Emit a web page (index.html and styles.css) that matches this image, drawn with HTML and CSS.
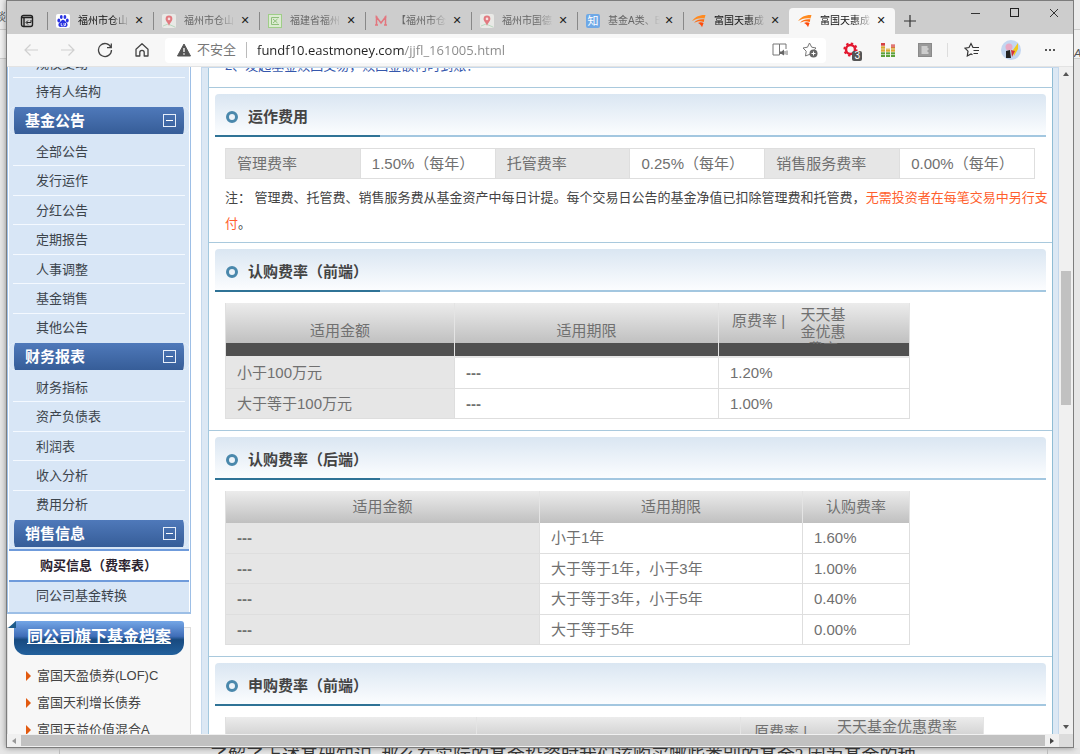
FILE: index.html
```html
<!DOCTYPE html>
<html lang="zh-CN">
<head>
<meta charset="utf-8">
<title>富国天惠成长 基金费率</title>
<link rel="stylesheet" href="styles.css">
</head>
<body>
<div class="gutter gutter-left">谈</div>
<div class="window">
  <header class="tabstrip">
    <button class="tab-menu" aria-label="标签操作"><svg width="14" height="14" viewBox="0 0 14 14"><rect x="1.5" y="1.5" width="11" height="11" rx="2" fill="none" stroke="#222" stroke-width="1.4"/><path d="M1.500 3.500h11M4 3v9" stroke="#222" stroke-width="1.400"/><path d="M11 6v2.500H6.500M8 6.500l-2 2 2 2" fill="none" stroke="#222"/></svg></button>
    <nav class="tabs">
      <div class="tab"><svg class="fav" viewBox="0 0 14 14"><rect width="14" height="14" rx="2" fill="#fff"/><g fill="#2932e1"><ellipse cx="2.800" cy="6.500" rx="1.400" ry="1.900"/><ellipse cx="5.300" cy="3" rx="1.400" ry="2"/><ellipse cx="8.900" cy="3" rx="1.400" ry="2"/><ellipse cx="11.300" cy="6.500" rx="1.400" ry="1.900"/><path d="M7 5.800c1.500 0 2 1.600 3.500 2.800 2 1.800 1 4.600-1 4.400-1.700-.3-3.300-.3-5 0-2 .2-3-2.600-1-4.400C5 7.400 5.500 5.800 7 5.800z"/></g><path d="M5.200 9v2.500h1.300M8 9v2.500h1.500V9" fill="none" stroke="#fff" stroke-width=".8"/></svg><span class="tab-title">福州市仓山</span><button class="close" aria-label="关闭"></button></div>
      <div class="tab idle"><svg class="fav" viewBox="0 0 14 14"><rect width="14" height="14" rx="2" fill="#e9e9e6"/><path d="M1 12l5-2 7 3" stroke="#b9d9c0" fill="none"/><path d="M7 1.500a3.400 3.400 0 0 1 3.400 3.400C10.400 7.400 7 9.500 7 12 7 9.500 3.600 7.400 3.600 4.900A3.400 3.400 0 0 1 7 1.500z" fill="#e27a80"/><circle cx="7" cy="4.900" r="1.300" fill="#f7dede"/></svg><span class="tab-title">福州市仓山</span><button class="close" aria-label="关闭"></button></div>
      <div class="tab idle"><svg class="fav" viewBox="0 0 14 14"><rect x=".5" y=".5" width="13" height="13" fill="#dcebd2" stroke="#9fce88"/><path d="M11 3.500H3.500v7H11M5 5l4.500 4M9.500 5L5 9" fill="none" stroke="#8fbf7b"/></svg><span class="tab-title">福建省福州</span><button class="close" aria-label="关闭"></button></div>
      <div class="tab idle"><svg class="fav" viewBox="0 0 14 14"><path d="M2.500 11V3l4.500 6 4.500-6v8M1 11h3M10 11h3M1.500 3h2M10.500 3h2" fill="none" stroke="#e2777f" stroke-width="1.500"/></svg><span class="tab-title">【福州市仓</span><button class="close" aria-label="关闭"></button></div>
      <div class="tab idle"><svg class="fav" viewBox="0 0 14 14"><rect width="14" height="14" rx="2" fill="#e9e9e6"/><path d="M1 12l5-2 7 3" stroke="#b9d9c0" fill="none"/><path d="M7 1.500a3.400 3.400 0 0 1 3.400 3.400C10.400 7.400 7 9.500 7 12 7 9.500 3.600 7.400 3.600 4.900A3.400 3.400 0 0 1 7 1.500z" fill="#e27a80"/><circle cx="7" cy="4.900" r="1.300" fill="#f7dede"/></svg><span class="tab-title">福州市国德</span><button class="close" aria-label="关闭"></button></div>
      <div class="tab idle"><span class="fav fav-zhi">知</span><span class="tab-title">基金A类、B</span><button class="close" aria-label="关闭"></button></div>
      <div class="tab"><svg class="fav" viewBox="0 0 14 14"><path d="M0 7C3 3 7 .8 13.500 1L12.500 4.500C7 3.500 4 5 0 7z" fill="#ff8a1f"/><path d="M2 8.800C5 5.500 8 5 12.300 5.300L11.800 8C8 6.500 5 7.300 2 8.800z" fill="#ff6a10"/><path d="M6 9c2-1 4-.8 5.600 0L10 13.200C9 11 8 10 6 9z" fill="#ff4a0a"/></svg><span class="tab-title">富国天惠成</span><button class="close" aria-label="关闭"></button></div>
      <div class="tab active"><svg class="fav" viewBox="0 0 14 14"><path d="M0 7C3 3 7 .8 13.500 1L12.500 4.500C7 3.500 4 5 0 7z" fill="#ff8a1f"/><path d="M2 8.800C5 5.500 8 5 12.300 5.300L11.800 8C8 6.500 5 7.300 2 8.800z" fill="#ff6a10"/><path d="M6 9c2-1 4-.8 5.600 0L10 13.200C9 11 8 10 6 9z" fill="#ff4a0a"/></svg><span class="tab-title">富国天惠成</span><button class="close" aria-label="关闭"></button></div>
    </nav>
    <button class="new-tab" aria-label="新建标签"><svg width="12" height="12" viewBox="0 0 12 12"><path d="M6 0v12M0 6h12" stroke="#333" stroke-width="1.200"/></svg></button>
    <div class="win-controls">
      <button aria-label="最小化"><svg width="10" height="10" viewBox="0 0 10 10"><path d="M0 5.500h9" stroke="#333"/></svg></button>
      <button aria-label="最大化"><svg width="10" height="10" viewBox="0 0 10 10"><rect x=".5" y=".5" width="8" height="8" fill="none" stroke="#222"/></svg></button>
      <button aria-label="关闭窗口"><svg width="10" height="10" viewBox="0 0 10 10"><path d="M1 1l8 8M9 1L1 9" stroke="#333"/></svg></button>
    </div>
  </header>

  <div class="toolbar">
    <div class="nav-buttons">
      <button aria-label="后退"><svg width="16" height="16" viewBox="0 0 16 16"><path d="M15 8H2M7.500 2.500L2 8l5.500 5.500" fill="none" stroke="#d0d0d0" stroke-width="1.200"/></svg></button>
      <button aria-label="前进"><svg width="16" height="16" viewBox="0 0 16 16"><path d="M1 8h13M8.500 2.500L14 8l-5.500 5.500" fill="none" stroke="#d0d0d0" stroke-width="1.200"/></svg></button>
      <button aria-label="刷新"><svg width="16" height="16" viewBox="0 0 16 16"><path d="M14 5.500A6.500 6.500 0 1 0 14.500 8M14.300 1.500v4.200H10" fill="none" stroke="#444" stroke-width="1.300"/></svg></button>
      <button aria-label="主页"><svg width="16" height="16" viewBox="0 0 16 16"><path d="M2 7.200L8 1.800l6 5.400V14h-3.800v-3.500a2.200 2.200 0 0 0-4.400 0V14H2z" fill="none" stroke="#444" stroke-width="1.300" stroke-linejoin="round"/></svg></button>
    </div>
    <div class="address">
      <svg width="14" height="14" viewBox="0 0 14 14"><path d="M7 1l6.500 12H.5z" fill="#555" stroke="#555" stroke-linejoin="round"/><path d="M7 5v4M7 10.300v1.400" stroke="#fff" stroke-width="1.300"/></svg>
      <label class="unsafe" for="url">不安全</label>
      <input id="url" class="url" type="text" value="fundf10.eastmoney.com/jjfl_161005.html">
      <button aria-label="朗读"><svg width="16" height="14" viewBox="0 0 16 14"><path d="M7.500 12H1V1h6.500v11M7.500 1H14v5" fill="none" stroke="#777"/><path d="M8 8.500h1.500L12 6.500v6L9.500 11H8z" fill="#666"/><path d="M13 8v3.500M15 7.500v4.500" stroke="#777"/></svg></button>
      <button aria-label="收藏此页"><svg width="16" height="16" viewBox="0 0 16 16"><path d="M8 12.200L3.500 14l.7-4.800L1 6l4.500-.8L7.500 1l2.200 4.200 4.300.8-1.500 1.600" fill="none" stroke="#777"/><circle cx="11.500" cy="11.500" r="4" fill="#666"/><path d="M11.500 9.500v4M9.500 11.500h4" stroke="#fff"/></svg></button>
    </div>
    <div class="extensions">
      <button class="badged" aria-label="扩展"><svg width="16" height="16" viewBox="0 0 16 16"><circle cx="7.500" cy="7.500" r="4.500" fill="none" stroke="#e3172f" stroke-width="2.500"/><circle cx="7.500" cy="7.500" r="6.200" fill="none" stroke="#e3172f" stroke-width="1.800" stroke-dasharray="2.400 2.400"/></svg><span class="badge">3</span></button>
      <button aria-label="均衡器"><svg width="14" height="14" viewBox="0 0 14 14"><path d="M2 0v14" stroke="#d64242" stroke-width="4"/><path d="M2 3v11M7 5.500v8.500M12 3.500v10.500" stroke="#d8a92e" stroke-width="4"/><path d="M12 1.500v3" stroke="#d64242" stroke-width="4"/><path d="M2 9v5M7 9v5M12 9v5" stroke="#5da23a" stroke-width="4"/><path d="M0 3h14M0 6h14M0 9h14M0 11.500h14" stroke="#f7f7f7" stroke-width=".6"/></svg></button>
      <button aria-label="阅读"><svg width="14" height="14" viewBox="0 0 14 14"><rect x=".5" y=".5" width="13" height="13" fill="#9a9a9a" stroke="#8a8a8a"/><path d="M3.500 4h6M3.500 6h7M3.500 8h6M3.500 10h7" stroke="#fff"/></svg></button>
      <span class="divider"></span>
      <button aria-label="收藏夹"><svg width="16" height="16" viewBox="0 0 16 16"><path d="M9 5.500L7 1.500 5 5.500l-4 .7 3 3-.7 4.800L7 12l1.500.8M8.500 5.500H15M9.500 8.500H15M9.500 11.500H14" fill="none" stroke="#333" stroke-width="1.200"/></svg></button>
      <button aria-label="用户"><svg width="20" height="20" viewBox="0 0 20 20"><circle cx="10" cy="10" r="10" fill="#c3d6f0"/><circle cx="8" cy="7" r="3.500" fill="#e9a9c4"/><path d="M5 11l4-1 1 8H5z" fill="#222"/><path d="M17 3l-5 7 1 6 4-7z" fill="#f2c91c"/><path d="M10 10l1 7 3-6z" fill="#d2323a"/></svg></button>
      <button aria-label="更多"><svg width="14" height="4" viewBox="0 0 14 4"><circle cx="3" cy="2" r="1" fill="#222"/><circle cx="7" cy="2" r="1" fill="#222"/><circle cx="11" cy="2" r="1" fill="#222"/></svg></button>
    </div>
  </div>

  <div class="viewport">
    <div class="page">
      <aside class="side">
        <nav class="menu">
          <ul class="menu-list menu-top"><li><a href="#">规模变动</a></li><li><a href="#">持有人结构</a></li></ul>
          <h3 class="menu-head">基金公告<button class="fold" aria-label="收起"></button></h3>
          <ul class="menu-list"><li><a href="#">全部公告</a></li><li><a href="#">发行运作</a></li><li><a href="#">分红公告</a></li><li><a href="#">定期报告</a></li><li><a href="#">人事调整</a></li><li><a href="#">基金销售</a></li><li><a href="#">其他公告</a></li></ul>
          <h3 class="menu-head">财务报表<button class="fold" aria-label="收起"></button></h3>
          <ul class="menu-list"><li><a href="#">财务指标</a></li><li><a href="#">资产负债表</a></li><li><a href="#">利润表</a></li><li><a href="#">收入分析</a></li><li><a href="#">费用分析</a></li></ul>
          <h3 class="menu-head">销售信息<button class="fold" aria-label="收起"></button></h3>
          <ul class="menu-list menu-last"><li class="current"><a href="#">购买信息（费率表）</a></li><li><a href="#">同公司基金转换</a></li></ul>
        </nav>
        <section class="funds">
          <h3 class="funds-head"><a href="#">同公司旗下基金档案</a></h3>
          <ul class="funds-list"><li><a href="#">富国天盈债券(LOF)C</a></li><li><a href="#">富国天利增长债券</a></li><li><a href="#">富国天益价值混合A</a></li></ul>
        </section>
      </aside>

      <main class="main">
        <p class="faq"><a href="#">2、发起基金赎回交易，赎回金额何时到账？</a></p>
        <section class="block">
          <h2 class="title">运作费用</h2>
          <table class="rates rates-ops">
            <tr><th>管理费率</th><td>1.50%（每年）</td><th>托管费率</th><td>0.25%（每年）</td><th>销售服务费率</th><td>0.00%（每年）</td></tr>
          </table>
          <p class="note">注： 管理费、托管费、销售服务费从基金资产中每日计提。每个交易日公告的基金净值已扣除管理费和托管费，<span class="warn">无需投资者在每笔交易中另行支<br>付</span>。</p>
        </section>
        <section class="block">
          <h2 class="title">认购费率（前端）</h2>
          <table class="rates rates-front">
            <colgroup><col class="c229"><col class="c264"><col class="c191"></colgroup>
            <thead class="tall"><tr><th>适用金额</th><th>适用期限</th><th><div class="pair"><span>原费率 |</span><span class="promo">天天基金优惠费率</span></div></th></tr></thead>
            <tbody><tr><th>小于100万元</th><td class="none">---</td><td>1.20%</td></tr><tr><th>大于等于100万元</th><td class="none">---</td><td>1.00%</td></tr></tbody>
          </table>
        </section>
        <section class="block">
          <h2 class="title">认购费率（后端）</h2>
          <table class="rates rates-back">
            <colgroup><col class="c314"><col class="c263"><col class="c107"></colgroup>
            <thead><tr><th>适用金额</th><th>适用期限</th><th>认购费率</th></tr></thead>
            <tbody><tr><th class="none">---</th><td>小于1年</td><td>1.60%</td></tr><tr><th class="none">---</th><td>大于等于1年，小于3年</td><td>1.00%</td></tr><tr><th class="none">---</th><td>大于等于3年，小于5年</td><td>0.40%</td></tr><tr><th class="none">---</th><td>大于等于5年</td><td>0.00%</td></tr></tbody>
          </table>
        </section>
        <section class="block">
          <h2 class="title">申购费率（前端）</h2>
          <table class="rates rates-buy">
            <colgroup><col class="c251"><col class="c264"><col class="c243"></colgroup>
            <thead><tr><th></th><th></th><th><div class="pair"><span class="lower">原费率 |</span><span>天天基金优惠费率</span></div></th></tr></thead>
          </table>
        </section>
      </main>
    </div>
    <div class="vscroll"><i class="arrow up"></i><div class="vtrack"><div class="thumb"></div></div><i class="arrow down"></i></div>
  </div>
  <div class="hscroll"><i class="arrow left"></i><div class="thumb"></div><i class="arrow right"></i><div class="corner"></div></div>
</div>
<div class="gutter gutter-right"><i>A</i></div>
<p class="behind">了解了上述基础知识, 那么在实际的基金投资时我们该购买哪些类别的基金? 因为基金的种</p>
</body>
</html>
```

FILE: styles.css
```css
*, *::before, *::after { box-sizing: border-box; }
body {
  margin: 0;
  height: 100vh;
  overflow: hidden;
  display: grid;
  grid-template-columns: 6px minmax(0, 1fr) 6px;
  grid-template-rows: minmax(0, 1fr) 6px;
  background: #e6e6e6;
  font-family: "Liberation Sans", "Noto Sans CJK SC", sans-serif;
  color: #444;
}
h2, h3, p, ul { margin: 0; padding: 0; }
ul { list-style: none; }
a { color: inherit; text-decoration: none; }
button { border: 0; padding: 0; background: none; display: flex; align-items: center; justify-content: center; }
svg { display: block; flex: none; }

.gutter { overflow: hidden; font-size: 11px; line-height: 14px; color: #555; background: linear-gradient(#ececec 29px, #ccc 29px, #ccc 30px, #f2f2f2 30px, #f2f2f2 58px, #ccc 58px, #ccc 59px, #e6e6e6 59px); }
.gutter-left { padding-top: 10px; direction: rtl; }
.gutter-right { padding-top: 46px; }
.behind {
  grid-column: 1 / -1;
  margin-left: 59px;
  margin-right: 32px;
  padding-left: 150px;
  border-left: 1px solid #bbb;
  border-right: 1px solid #bbb;
  overflow: hidden;
  white-space: nowrap;
  font-family: "Liberation Serif", "Noto Sans CJK SC", serif;
  font-size: 18px;
  line-height: 16px;
  color: #333;
}

.window {
  display: flex;
  flex-direction: column;
  min-width: 0;
  min-height: 0;
  border: 1px solid #7d7d7d;
  background: #fff;
  box-shadow: 0 0 6px rgba(0, 0, 0, .4);
  overflow: hidden;
}

/* tabs */
.tabstrip { display: flex; height: 33px; background: #cdcdcd; flex: none; }
.tab-menu { width: 40px; padding-top: 6px; }
.tabs { display: flex; padding-top: 7px; }
.tab { width: 106px; display: flex; align-items: center; padding: 0 7px 0 8px; border-left: 1px solid #888; border-image: linear-gradient(transparent 5px, #888 5px, #888 21px, transparent 21px) 1; }
.fav { width: 14px; height: 14px; flex: none; }
.fav-zhi { background: #6fa8e6; color: #fff; border-radius: 2px; font-size: 11px; line-height: 14px; text-align: center; }
.tab-title { width: 52px; margin-left: 8px; overflow: hidden; white-space: nowrap; font-size: 10px; line-height: 16px; color: #111; -webkit-mask-image: linear-gradient(90deg, #000 65%, transparent); mask-image: linear-gradient(90deg, #000 65%, transparent); }
.idle .tab-title { color: #666; }
.tab.active { border: 0; padding-left: 9px; border-radius: 4px 4px 0 0; background: #f7f7f7; }
.close { margin-left: auto; width: 14px; height: 14px; }
.close::before { content: "✕"; font-family: "DejaVu Sans", sans-serif; font-size: 11px; line-height: 14px; color: #222; }
.new-tab { width: 30px; padding-top: 6px; }
.win-controls { display: flex; margin-left: auto; height: 24px; }
.win-controls button { width: 39px; }

/* toolbar */
.toolbar { display: flex; align-items: center; height: 33px; background: #f7f7f7; border-bottom: 1px solid #e3e3e3; flex: none; }
.nav-buttons { display: flex; padding-left: 5px; width: 158px; flex: none; }
.nav-buttons button { width: 37px; }
.address { flex: 1; min-width: 0; display: flex; align-items: center; height: 25px; padding: 0 2px 0 12px; background: #fff; border-radius: 4px; }
.unsafe { margin-left: 6px; padding-right: 10px; border-right: 1px solid #bbb; font-size: 13px; line-height: 16px; color: #777; }
.url { flex: 1; min-width: 0; border: 0; outline: 0; margin-left: 10px; padding: 0; font: 13px/20px "Open Sans", sans-serif; color: transparent; background: linear-gradient(90deg, #222 148px, #888 148px); -webkit-background-clip: text; background-clip: text; }
.address button { width: 31px; margin-right: -1px; }
.extensions { display: flex; align-items: center; padding: 0 4px 0 6px; flex: none; }
.extensions button { width: 37px; height: 24px; }
.extensions button:nth-last-child(-n+3) { width: 39px; }
.divider { width: 1px; height: 14px; margin: 0 4px; background: #ddd; }
.badged { position: relative; }
.badge { position: absolute; right: 7px; bottom: 1px; padding: 0 2px; border-radius: 2px; background: #555; color: #fff; font-size: 10px; line-height: 10px; }

/* viewport */
.viewport { flex: 1; min-height: 0; display: flex; overflow: hidden; }
.page { flex: 1; min-width: 0; display: grid; grid-template-columns: 184px minmax(0, 1fr); column-gap: 10px; overflow: hidden; }
.arrow { width: 14px; height: 14px; flex: none; display: flex; align-items: center; justify-content: center; }
.arrow::before { content: ""; border: 3px solid transparent; }
.up::before { border-top: 0; border-bottom: 4px solid #555; }
.down::before { border-bottom: 0; border-top: 4px solid #555; }
.left::before { border-left: 0; border-right: 4px solid #999; }
.right::before { border-right: 0; border-left: 4px solid #444; }
.vscroll { width: 14px; flex: none; display: flex; flex-direction: column; background: #f0f0f0; }
.vtrack { flex: 1; display: grid; grid-template-rows: 190fr 135fr 315fr; padding: 0 2px; }
.thumb { background: #c1c1c1; }
.vtrack .thumb { grid-row: 2; }
.hscroll { flex: none; display: flex; height: 13px; align-items: center; background: #f0f0f0; }
.hscroll .thumb { flex: 1; height: 11px; }
.corner { width: 14px; align-self: stretch; background: #dcdcdc; }

/* sidebar */
.menu { border: 1px solid #9dbfe6; border-width: 0 1px 2px; padding: 0 1px; background: #fff; }
.menu-list { padding: 3px 4px 0; background: #d8e6f6; font-size: 13px; }
.menu-list li { height: 29px; display: flex; align-items: center; padding-left: 23px; border-bottom: 1px solid #f4f9ff; }
.menu-list li:nth-child(even) { height: 30px; }
.menu-list li:last-child { border-bottom: 0; padding-bottom: 3px; }
.menu-list a { line-height: 13px; color: #3c444c; }
.menu-top { padding-top: 0; }
.menu-top li:first-child { height: 11px; align-items: flex-end; padding-bottom: 7px; }
.menu-top li:nth-child(2) { height: 29px; }
.menu-head { display: flex; justify-content: space-between; align-items: center; height: 27px; padding: 0 8px 0 11px; font-size: 15px; line-height: 20px; color: #fff; background: linear-gradient(#4f79ba, #365d98); border: solid #d8e6f6; border-width: 0 5px; border-radius: 6px; background-clip: padding-box; box-shadow: 0 0 0 20px #d8e6f6; clip-path: inset(0); }
.fold { width: 13px; height: 13px; border: 1px solid #e6eefa; }
.fold::before { content: ""; width: 7px; height: 1px; background: #fff; }
.menu-last { padding: 2px 0 0; }
.menu-last li:nth-child(2) { height: 30px; padding-left: 27px; }
.menu-last .current { height: 33px; padding-left: 31px; background: #fff; border: solid #6f9bdb; border-width: 2px 0; font-weight: bold; }
.menu-last .current a { color: #2c2430; }
.funds { position: relative; margin-top: 13px; height: 180px; padding: 0 6px; background: #f7f7f7; border: 1px solid #ddd; }
.funds::before { content: ""; position: absolute; left: 0; top: -7px; width: 8px; height: 7px; background: #1d5a8a; clip-path: polygon(0 100%, 100% 0, 100% 100%); }
.funds-head { height: 34px; margin-top: -7px; border-radius: 3px 3px 12px 12px; background: linear-gradient(#74a6e6, #3f6db8 45%, #184a80 55%, #22609c); text-align: center; font-size: 16px; line-height: 32px; color: #fff; text-decoration: underline; }
.funds-list { padding: 7px 0 0 12px; font-size: 13px; line-height: 27px; }
.funds-list li { display: flex; align-items: center; gap: 6px; white-space: nowrap; }
.funds-list li::before { content: ""; border: 5px solid transparent; border-left-color: #e25a10; border-right: 0; }

/* main column */
.main { border: solid #dce8f4; border-width: 0 6px 0 7px; box-shadow: inset 1px 0 #a3c8de, inset -1px 0 #8fbcd4; outline: 1px solid #c4d8ec; outline-offset: -1px; }
.faq { display: flex; align-items: flex-end; height: 21px; padding: 0 0 15px 17px; border-bottom: 1px solid #a9c9dd; font-size: 13px; line-height: 13px; white-space: nowrap; color: #3557ac; }
.block { margin: 0 1px; padding: 6px 6px 11px; border-bottom: 1px solid #a9c9dd; }
.title {
  display: flex;
  align-items: center;
  gap: 10px;
  height: 43px;
  margin-bottom: 11px;
  padding: 4px 0 2px 11px;
  border-radius: 4px 4px 0 0;
  font-size: 15px;
  line-height: 20px;
  background: linear-gradient(#2f7396, #2f7396) 0 100% / 165px 2px no-repeat, linear-gradient(#a3c7e0, #a3c7e0) 0 100% / 100% 2px no-repeat, linear-gradient(#dae6f2, #fdfeff);
}
.title::before { content: ""; width: 12px; height: 12px; border: 3px solid #4a88ac; border-radius: 50%; }
.rates { margin-left: 10px; table-layout: fixed; border-spacing: 0; border-left: 1px solid #e0e0e0; font-size: 15px; line-height: 20px; color: #707070; }
.rates th, .rates td { height: 30px; padding: 0 11px; text-align: left; font-weight: normal; white-space: nowrap; border: solid #dedede; border-width: 0 1px 1px 0; }
.rates th { background: #e6e6e6; }
.rates tr:nth-child(odd) > * { height: 31px; }
.rates .none { font-weight: bold; }
.rates-ops { width: calc(100% - 21px); }
.rates-ops th, .rates-ops td { border-top-width: 1px; }
.rates-front, .rates-back { width: 684px; }
.rates-buy { width: 758px; }
.c107 { width: 107px; }
.c191 { width: 191px; }
.c229 { width: 229px; }
.c243 { width: 243px; }
.c251 { width: 251px; }
.c263 { width: 263px; }
.c264 { width: 264px; }
.c314 { width: 314px; }
.rates thead tr:first-child > th { height: 32px; text-align: center; background: linear-gradient(#ececec, #c0c0c0); border-bottom: 0; border-right-color: #e4e4e4; }
.rates .tall tr:first-child > th { height: 55px; background: linear-gradient(#ececec, #c0c0c0 40px, #505050 40px, #505050 53px, #e6e6e6 53px); }
.pair { display: flex; gap: 30px; height: 32px; padding-left: 2px; }
.tall .pair { gap: 15px; height: 54px; align-items: flex-start; padding-top: 7px; }
.tall .pair .promo { width: 46px; height: 38px; margin-top: -5px; overflow: hidden; white-space: normal; line-height: 17px; }
.lower { padding-top: 5px; }
.note { margin: 6px 0 -6px; padding-left: 10px; font-size: 13px; line-height: 26px; white-space: nowrap; }
.warn { color: #ff5f2e; }
```
